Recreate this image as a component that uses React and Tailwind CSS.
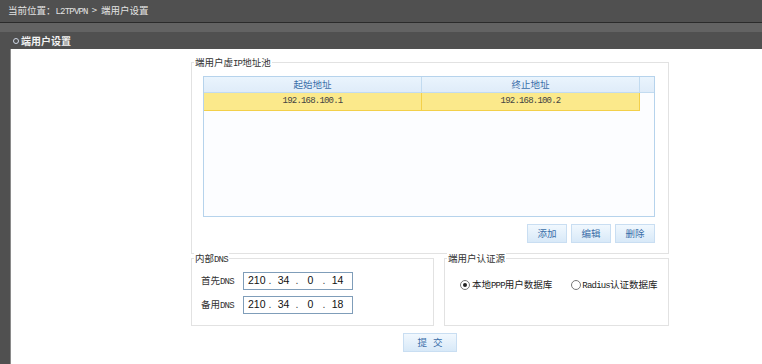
import React from 'react';

const cjk = { fontFamily: '"Noto Sans CJK SC", "Liberation Sans", sans-serif' };
const mono = { fontFamily: '"Liberation Mono", "Noto Sans CJK SC", monospace' };

function M({ children }) {
  return (
    <span style={mono} className="text-[9px] tracking-[-0.8px]">
      {children}
    </span>
  );
}

function Group({ title, className, children }) {
  return (
    <div className={`relative border border-[#e2e2e2] ${className}`}>
      <div className="absolute left-[2px] top-[-8px] bg-white px-[1px] text-[9.5px] leading-[14px] text-[#333]">
        {title}
      </div>
      {children}
    </div>
  );
}

function BlueButton({ children, className = '' }) {
  return (
    <button
      className={`h-[19px] border border-[#c9def2] bg-gradient-to-b from-[#f1f8fe] to-[#d8e9f8] text-[9.5px] text-[#3a6ea8] ${className}`}
    >
      {children}
    </button>
  );
}

function IpInput({ parts }) {
  return (
    <div
      style={{ fontFamily: '"Liberation Sans", Arial, sans-serif' }}
      className="flex h-[18px] w-[110px] items-center border border-[#7f9db9] bg-white pl-[4px] text-[10.5px] text-[#111]"
    >
      {parts.map((p, i) => (
        <React.Fragment key={i}>
          <span className="w-[17px] text-center">{p}</span>
          {i < parts.length - 1 && <span className="w-[10px] text-center text-[#444]">.</span>}
        </React.Fragment>
      ))}
    </div>
  );
}

function Radio({ checked }) {
  return (
    <span className="flex h-[10px] w-[10px] items-center justify-center rounded-full border border-[#777] bg-white">
      {checked && <span className="h-[4px] w-[4px] rounded-full bg-[#222]" />}
    </span>
  );
}

export default function App() {
  return (
    <div style={cjk} className="h-[364px] w-[762px] overflow-hidden bg-[#505050]">
      <div className="flex h-[22px] items-center pl-[8px] text-[9.5px] text-[#e2e2e2]">
        <span>
          当前位置：<M>L2TPVPN</M>
          <span className="mx-[4px]">&gt;</span>端用户设置
        </span>
      </div>
      <div className="h-px bg-[#2b2b2b]" />
      <div className="h-[9px] bg-[#636363]" />
      <div className="flex h-[17px] items-center gap-[2px] pl-[13px] text-[10px] font-bold text-[#f2f2f2]">
        <span className="h-[6px] w-[6px] rounded-full border-[1.5px] border-[#cfd8e6]" />
        端用户设置
      </div>
      <div className="ml-[10px] h-[315px] border-l border-[#8a8a8a] bg-white pt-[13px] pl-[180px]">
        <Group title={<>端用户虚<M>IP</M>地址池</>} className="h-[192px] w-[478px] pl-[11px] pt-[13px]">
          <div className="flex h-[141px] w-[452px] flex-col border border-[#b6d3ec] bg-[#fcfdff]">
            <div className="flex h-[16px] border-b border-[#c2dbf0] bg-gradient-to-b from-[#eaf4fd] to-[#dfecf9] text-[9.5px] text-[#3a6ea8]">
              <div className="flex w-[218px] items-center justify-center border-r border-[#c2dbf0]">起始地址</div>
              <div className="flex w-[218px] items-center justify-center border-r border-[#c2dbf0]">终止地址</div>
              <div className="flex-1" />
            </div>
            <div className="flex h-[18px] w-[436px] border-b border-r border-[#f3d04a] bg-[#fbe98b] text-[#444]">
              <div className="flex w-[218px] items-center justify-center border-r border-[#f3d04a]">
                <M>192.168.100.1</M>
              </div>
              <div className="flex flex-1 items-center justify-center">
                <M>192.168.100.2</M>
              </div>
            </div>
          </div>
          <div className="mt-[7px] flex w-[452px] justify-end gap-[4px]">
            <BlueButton className="w-[40px]">添加</BlueButton>
            <BlueButton className="w-[40px]">编辑</BlueButton>
            <BlueButton className="w-[40px]">删除</BlueButton>
          </div>
        </Group>
        <div className="mt-[4px] flex gap-[10px]">
          <Group title={<>内部<M>DNS</M></>} className="h-[68px] w-[243px] pl-[9px] pt-[13px]">
            <div className="flex flex-col gap-[6px] text-[9.5px] text-[#333]">
              <div className="flex items-center">
                <span className="w-[42px]">首先<M>DNS</M></span>
                <IpInput parts={['210', '34', '0', '14']} />
              </div>
              <div className="flex items-center">
                <span className="w-[42px]">备用<M>DNS</M></span>
                <IpInput parts={['210', '34', '0', '18']} />
              </div>
            </div>
          </Group>
          <Group title="端用户认证源" className="h-[68px] w-[225px] pl-[15px] pt-[18px]">
            <div className="flex items-center text-[9.5px] text-[#222]">
              <Radio checked />
              <span className="ml-[2px]">本地<M>PPP</M>用户数据库</span>
              <span className="ml-[19px]">
                <Radio />
              </span>
              <span className="ml-[1px]"><M>Radius</M>认证数据库</span>
            </div>
          </Group>
        </div>
        <BlueButton className="ml-[212px] mt-[7px] w-[54px] tracking-[6px] pl-[6px]">提交</BlueButton>
      </div>
    </div>
  );
}
